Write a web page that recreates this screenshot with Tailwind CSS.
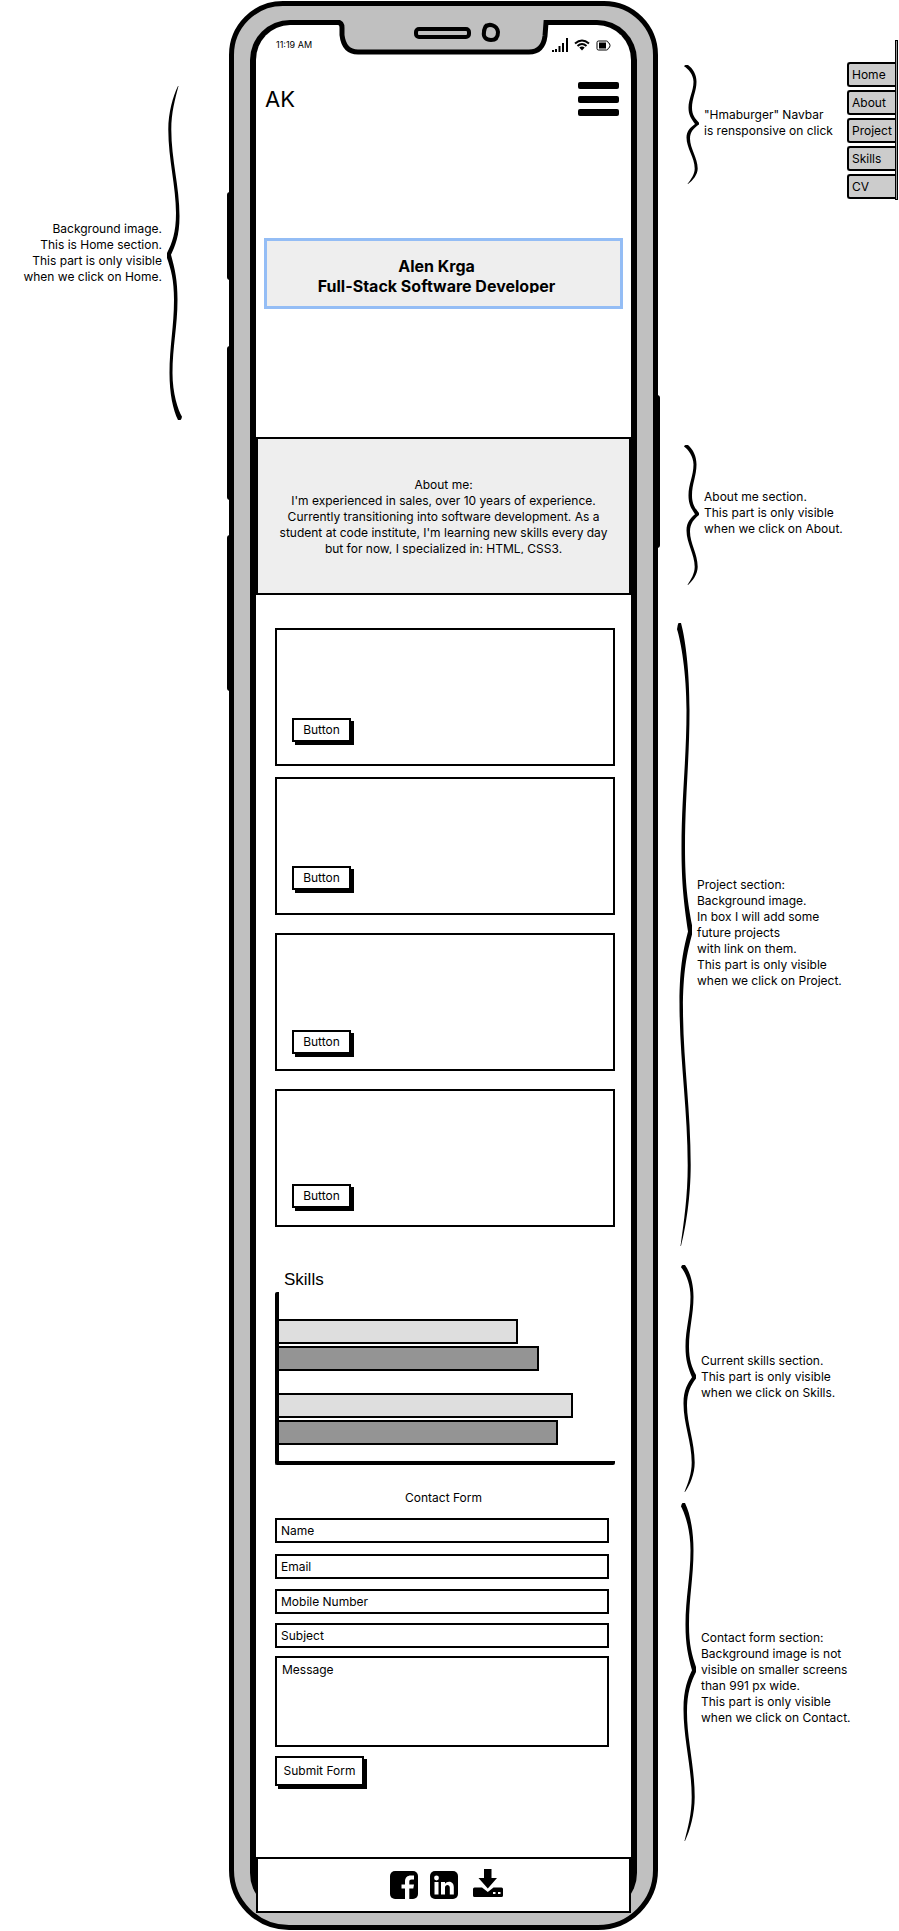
<!DOCTYPE html>
<html lang="en">
<head>
<meta charset="utf-8">
<meta name="viewport" content="width=device-width, initial-scale=1">
<title>Alen Krga – mobile wireframe</title>
<script src="https://cdn.jsdelivr.net/npm/@tailwindcss/browser@4"></script>
</head>
<body class="bg-white text-black font-['Inter',sans-serif] text-[12px] leading-4 overflow-x-hidden">
<svg class="hidden" aria-hidden="true">
  <symbol id="brace" viewBox="0 0 15 100" preserveAspectRatio="none">
    <path d="M0 1Q1 -.5 4 0C9 3 12.5 8 12.5 14C12.5 22 8 28 8 36C8 42 11 45 15 48.5L15 50C10 53 6 56 6 62C6 70 13.7 78 13.7 87C13.7 92 9 97 4 100L3.500 100C7 96 10.700 92 10.700 87C10.700 78 2.500 70 2.500 61C2.500 55 7 52 11 49.500C7 45 4.500 42 4.500 36C4.500 28 9.500 22 9.500 14C9.500 8 4 3 0 1Z"/>
  </symbol>
</svg>

<div class="grid grid-cols-[229px_minmax(0,1fr)_241px]">

  <!-- Left note -->
  <aside class="pt-[86px] pr-[47px]">
    <div class="flex items-center justify-end gap-[5px]">
      <p class="text-right whitespace-nowrap">Background image.<br>This is Home section.<br>This part is only visible<br>when we click on Home.</p>
      <svg class="w-[15px] h-[334px] rotate-180" aria-hidden="true"><use href="#brace"/></svg>
    </div>
  </aside>

  <!-- Phone -->
  <div class="relative mt-px border-[5px] border-black bg-[#c0c0c0] rounded-t-[54px] rounded-b-[60px] pt-[14px] px-4 pb-3">
    <span class="absolute -left-[7px] top-[186px] w-[3px] h-[88px] bg-black rounded-l-sm"></span>
    <span class="absolute -left-[7px] top-[340px] w-[3px] h-[154px] bg-black rounded-l-sm"></span>
    <span class="absolute -left-[7px] top-[529px] w-[3px] h-[156px] bg-black rounded-l-sm"></span>
    <span class="absolute -right-[7px] top-[389px] w-[3px] h-[153px] bg-black rounded-r-sm"></span>

    <div class="bg-white border-x-[6px] border-t-[5px] border-black rounded-[40px]">
      <svg class="absolute left-1/2 -translate-x-1/2 top-[12px] w-[216px] h-[40px]" viewBox="0 0 216 40" fill="none" stroke="#000" aria-hidden="true">
        <path d="M4 0H212L209 20Q207 34 193 34H22Q8 34 6 20Z" fill="#c0c0c0" stroke="none"/>
        <path d="M0 4.500H2Q6 4.500 6 10V17Q8 34 22 34H193Q207 34 209 18L210 4.500H216" stroke-width="5"/>
        <rect x="80" y="11" width="53" height="8" rx="3" stroke-width="4"/>
        <path d="M149 9C153 5 161 7 162 14C162 20 159 22 155 22C150 22 147 19 148 14Q148 10 151 7" stroke-width="4"/>
      </svg>

      <!-- Status bar -->
      <div class="flex h-10 items-center justify-between pl-5 pr-5">
        <span class="text-[9px]">11:19 AM</span>
        <span class="flex items-center gap-[6px]">
          <svg class="w-4 h-[14px]" viewBox="0 0 16 14" aria-hidden="true"><path d="M0 12h2v2H0zM3 11h2v3H3zM6.500 8h2v6h-2zM10 5h2v9h-2zM14 0h2v14h-2z"/></svg>
          <svg class="w-4 h-3" viewBox="0 0 16 12" fill="none" stroke="#000" stroke-width="2" aria-hidden="true"><path d="M1 4.500Q8 -1.500 15 4.500M3.500 7Q8 3 12.500 7"/><path d="M5.300 8.500Q8 6.500 10.700 8.500L8 11.500Z" fill="#000" stroke="none"/></svg>
          <svg class="w-[15px] h-[11px]" viewBox="0 0 15 11" fill="none" stroke="#000" aria-hidden="true"><path d="M2.500 1H10.500Q12 1 12 2.500Q14 3 14 5.500Q14 8 12 8.500Q12 10 10.500 10H2.500Q1 10 1 8.500V2.500Q1 1 2.500 1Z"/><path d="M3 2.500h7v6H3z" fill="#000" stroke="none"/></svg>
        </span>
      </div>

      <header class="flex items-center justify-between pt-[17px] pl-[9px] pr-3">
        <a href="#home" class="text-[22px] leading-8">AK</a>
        <button type="button" aria-label="Menu" class="flex flex-col justify-between w-[41px] h-[34px]">
          <span class="h-[7px] w-full rounded-[2px] bg-black"></span>
          <span class="h-[7px] w-full rounded-[2px] bg-black"></span>
          <span class="h-[7px] w-full rounded-[2px] bg-black"></span>
        </button>
      </header>

      <section id="home" class="mt-[122px] mx-2 h-[71px] border-[3px] border-[#94bdf5] bg-[#eee] pt-[15px] pr-[14px]">
        <h1 class="h-[37px] overflow-hidden text-center text-[16px] leading-5 font-bold whitespace-nowrap">Alen Krga<br>Full-Stack Software Developer</h1>
      </section>

      <section id="about" class="mt-[128px] h-[158px] border-2 border-black bg-[#eee] pt-[38px]">
        <p class="h-[77px] overflow-hidden text-center whitespace-nowrap">About me:<br>I'm experienced in sales, over 10 years of experience.<br>Currently transitioning into software development. As a<br>student at code institute, I'm learning new skills every day<br>but for now, I specialized in: HTML, CSS3.</p>
      </section>

      <section id="project" class="mt-[33px] pl-[19px] pr-4">
        <article class="flex items-end h-[138px] border-2 border-black pl-[15px] pb-[22px]">
          <button type="button" class="h-6 w-[59px] border-2 border-black bg-white shadow-[3px_3px_0_#000] leading-5">Button</button>
        </article>
        <article class="mt-[11px] flex items-end h-[138px] border-2 border-black pl-[15px] pb-[23px]">
          <button type="button" class="h-6 w-[59px] border-2 border-black bg-white shadow-[3px_3px_0_#000] leading-5">Button</button>
        </article>
        <article class="mt-[18px] flex items-end h-[138px] border-2 border-black pl-[15px] pb-[15px]">
          <button type="button" class="h-6 w-[59px] border-2 border-black bg-white shadow-[3px_3px_0_#000] leading-5">Button</button>
        </article>
        <article class="mt-[18px] flex items-end h-[138px] border-2 border-black pl-[15px] pb-[17px]">
          <button type="button" class="h-6 w-[59px] border-2 border-black bg-white shadow-[3px_3px_0_#000] leading-5">Button</button>
        </article>
      </section>

      <section id="skills" class="mt-[41px] pl-[19px] pr-4">
        <h2 class="pl-[9px] text-[17px] leading-6 font-['Liberation_Sans',sans-serif]">Skills</h2>
        <div class="h-[173px] border-l-4 border-b-4 border-black rounded-xs pt-[27px] flex flex-col">
          <div class="h-[25px] border-2 border-l-0 border-black bg-[#dedede]" style="width:71.2%"></div>
          <div class="mt-[2px] h-[25px] border-2 border-l-0 border-black bg-[#949494]" style="width:77.5%"></div>
          <div class="mt-[22px] h-[25px] border-2 border-l-0 border-black bg-[#dedede]" style="width:87.6%"></div>
          <div class="mt-[2px] h-[25px] border-2 border-l-0 border-black bg-[#949494]" style="width:83.1%"></div>
        </div>
      </section>

      <section id="contact" class="mt-[25px]">
        <h2 class="text-center">Contact Form</h2>
        <form class="mt-[12px] pl-[19px] pr-[22px] flex flex-col items-start">
          <input type="text" aria-label="Name" placeholder="Name" class="w-full h-[25px] border-2 border-black px-1 pb-px placeholder:text-black">
          <input type="email" aria-label="Email" placeholder="Email" class="mt-[11px] w-full h-[25px] border-2 border-black px-1 pb-px placeholder:text-black">
          <input type="tel" aria-label="Mobile Number" placeholder="Mobile Number" class="mt-[10px] w-full h-[25px] border-2 border-black px-1 pb-px placeholder:text-black">
          <input type="text" aria-label="Subject" placeholder="Subject" class="mt-[9px] w-full h-[25px] border-2 border-black px-1 pb-px placeholder:text-black">
          <textarea aria-label="Message" placeholder="Message" class="mt-2 w-full h-[91px] resize-none border-2 border-black px-[5px] py-1 placeholder:text-black"></textarea>
          <button type="button" class="mt-[9px] h-[30px] w-[89px] border-2 border-black bg-white shadow-[3px_3px_0_#000] whitespace-nowrap">Submit Form</button>
        </form>
      </section>

      <footer class="relative mt-[71px] h-14 border-2 border-black bg-white flex items-center justify-center pl-[5px]">
        <a href="#facebook" aria-label="Facebook" class="block">
          <svg class="size-7" viewBox="0 0 28 28"><rect width="28" height="28" rx="5"/><path d="M15 28V17.500H11.500V13.500H15V10.500C15 6.500 17.500 4.500 20.800 4.500H24V8.500H21.800C20 8.500 19.300 9.200 19.300 10.800V13.500H24L23.300 17.500H19.300V28Z" fill="#fff"/></svg>
        </a>
        <a href="#linkedin" aria-label="LinkedIn" class="block ml-3">
          <svg class="size-7" viewBox="0 0 28 28"><rect width="28" height="28" rx="5"/><path d="M4.500 11H8.500V23.500H4.500ZM11 11H15V12.800C17 9.800 23.800 9.800 23.800 16V23.500H19.800V16.800C19.800 13.200 15 13.200 15 16.800V23.500H11Z" fill="#fff"/><circle cx="6.500" cy="7" r="2.400" fill="#fff"/></svg>
        </a>
        <a href="#cv" aria-label="Download CV" class="block ml-[15px] pb-1">
          <svg class="w-[30px] h-7" viewBox="0 0 30 28"><path d="M11 0H18.500V9H24L14.800 19.500L5.500 9H11ZM0 20Q0 18.500 1.500 18.500H9L14.800 23L20.500 18.500H28.500Q30 18.500 30 20V26.500Q30 28 28.500 28H1.500Q0 28 0 26.500Z"/><path d="M20 23h2.500v2H20zM25 23h2.500v2H25z" fill="#fff"/></svg>
        </a>
      </footer>
    </div>
  </div>

  <!-- Right notes -->
  <aside class="pt-10">
    <div class="flex h-[160px] items-start justify-between">
      <div class="mt-[25px] ml-[26px] flex items-center gap-[5px]">
        <svg class="w-[15px] h-[119px] shrink-0" aria-hidden="true"><use href="#brace"/></svg>
        <p class="whitespace-nowrap pb-1">"Hmaburger" Navbar<br>is rensponsive on click</p>
      </div>
      <div class="flex h-full pr-px">
        <nav class="mt-[22px] flex w-[48px] flex-col gap-[3px]">
          <a href="#home" class="block h-[25px] border-2 border-r-0 border-black rounded-l-[3px] bg-[#ccc] pl-[3px] leading-[21px]">Home</a>
          <a href="#about" class="block h-[25px] border-2 border-r-0 border-black rounded-l-[3px] bg-[#ccc] pl-[3px] leading-[21px]">About</a>
          <a href="#project" class="block h-[25px] border-2 border-r-0 border-black rounded-l-[3px] bg-[#ccc] pl-[3px] leading-[21px]">Project</a>
          <a href="#skills" class="block h-[25px] border-2 border-r-0 border-black rounded-l-[3px] bg-[#ccc] pl-[3px] leading-[21px]">Skills</a>
          <a href="#cv" class="block h-[25px] border-2 border-r-0 border-black rounded-l-[3px] bg-[#ccc] pl-[3px] leading-[21px]">CV</a>
        </nav>
        <span class="w-[3px] border border-black bg-[#999]"></span>
      </div>
    </div>

    <div class="mt-[245px] ml-[26px] flex items-center gap-[5px]">
      <svg class="w-[15px] h-[140px] shrink-0" aria-hidden="true"><use href="#brace"/></svg>
      <p class="whitespace-nowrap pb-1">About me section.<br>This part is only visible<br>when we click on About.</p>
    </div>

    <div class="mt-[38px] ml-[19px] flex items-center gap-[5px]">
      <svg class="w-[15px] h-[623px] shrink-0" aria-hidden="true"><use href="#brace"/></svg>
      <p class="whitespace-nowrap pb-1">Project section:<br>Background image.<br>In box I will add some<br>future projects<br>with link on them.<br>This part is only visible<br>when we click on Project.</p>
    </div>

    <div class="mt-[19px] ml-[23px] flex items-center gap-[5px]">
      <svg class="w-[15px] h-[227px] shrink-0" aria-hidden="true"><use href="#brace"/></svg>
      <p class="whitespace-nowrap pb-1">Current skills section.<br>This part is only visible<br>when we click on Skills.</p>
    </div>

    <div class="mt-[11px] ml-[23px] flex items-center gap-[5px]">
      <svg class="w-[15px] h-[338px] shrink-0" aria-hidden="true"><use href="#brace"/></svg>
      <p class="whitespace-nowrap pt-3">Contact form section:<br>Background image is not<br>visible on smaller screens<br>than 991 px wide.<br>This part is only visible<br>when we click on Contact.</p>
    </div>
  </aside>
</div>
</body>
</html>
